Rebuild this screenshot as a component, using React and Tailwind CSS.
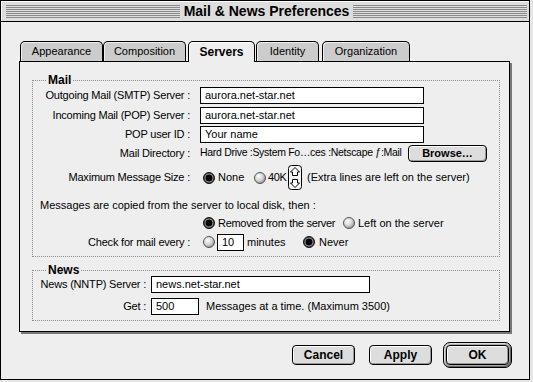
import React from "react";

const sans = "font-['Liberation_Sans',Arial,sans-serif]";

function Stripes() {
  return (
    <div className="flex flex-1 flex-col gap-px">
      {[0, 1, 2, 3, 4, 5, 6].map((i) => (
        <div key={i} className="h-px bg-[#8a8a8a]" />
      ))}
    </div>
  );
}

function Radio({ on }) {
  if (on) {
    return (
      <svg width="12" height="12" viewBox="0 0 12 12" className="shrink-0">
        <circle cx="6" cy="6" r="5.5" fill="#444" stroke="#111" />
        <circle cx="6" cy="6" r="4" fill="none" stroke="#9a9a9a" strokeWidth="0.8" />
        <circle cx="6" cy="6" r="3.3" fill="#000" />
      </svg>
    );
  }
  return (
    <svg width="12" height="12" viewBox="0 0 12 12" className="shrink-0">
      <defs>
        <radialGradient id="sphere" cx="38%" cy="35%" r="70%">
          <stop offset="0" stopColor="#ffffff" />
          <stop offset="0.55" stopColor="#d4d4d4" />
          <stop offset="1" stopColor="#8a8a8a" />
        </radialGradient>
      </defs>
      <circle cx="6" cy="6" r="5.5" fill="url(#sphere)" stroke="#555" />
    </svg>
  );
}

function Stepper() {
  return (
    <svg width="14" height="25" viewBox="0 0 14 25" className="shrink-0">
      <rect x="0.5" y="0.5" width="13" height="24" rx="3" fill="#f4f4f4" stroke="#000" />
      <path d="M7 2.5 L11.5 7 L9.5 7 L9.5 10.5 L4.5 10.5 L4.5 7 L2.5 7 Z" fill="#fff" stroke="#000" />
      <path d="M7 22.5 L11.5 18 L9.5 18 L9.5 14.5 L4.5 14.5 L4.5 18 L2.5 18 Z" fill="#fff" stroke="#000" />
    </svg>
  );
}

function Field({ className, children }) {
  return (
    <div className={`h-[17px] border border-black bg-white flex items-center pl-[4px] whitespace-nowrap ${className}`}>
      {children}
    </div>
  );
}

function MailRow({ label, children, className = "" }) {
  return (
    <div className={`flex items-center ${className}`}>
      <div className="w-[157px] shrink-0 flex justify-end whitespace-nowrap tracking-[-0.2px]">{label}</div>
      <div className="ml-[10px] flex items-center">{children}</div>
    </div>
  );
}

function NewsRow({ label, children, className = "" }) {
  return (
    <div className={`flex items-center ${className}`}>
      <div className="w-[113px] shrink-0 flex justify-end whitespace-nowrap tracking-[-0.2px]">{label}</div>
      <div className="ml-[5px] flex items-center">{children}</div>
    </div>
  );
}

export default function App() {
  return (
    <div className={`w-[533px] h-[382px] bg-[#e6e6e6] text-[11px] text-black ${sans}`}>
      <div className="w-[530px] h-[380px] border border-black bg-[#eeeeee] flex flex-col">
        {/* title bar */}
        <div className="h-[21px] shrink-0 border-b border-black bg-[#dddddd] flex items-center pl-[5px] pr-[2px] shadow-[inset_1px_1px_0_#ffffff]">
          <Stripes />
          <div className="px-[4px] text-[14px] font-bold leading-none whitespace-nowrap">
            Mail &amp; News Preferences
          </div>
          <Stripes />
        </div>

        <div className="pl-[18px] pt-[19px]">
          {/* tabs */}
          <div className="flex h-[20px] items-start">
            <div className="ml-[1px] w-[83px] h-[20px] rounded-t-[5px] border border-b-0 border-black bg-[#cccccc] shadow-[inset_1px_1px_0_#eeeeee] flex items-center justify-center">
              Appearance
            </div>
            <div className="w-[83px] h-[20px] rounded-t-[5px] border border-b-0 border-black bg-[#cccccc] shadow-[inset_1px_1px_0_#eeeeee] flex items-center justify-center">
              Composition
            </div>
            <div className="relative z-10 ml-[2px] w-[67px] h-[21px] rounded-t-[5px] border border-b-0 border-black bg-[#eeeeee] shadow-[inset_1px_1px_0_#ffffff] flex items-center justify-center text-[12px] font-bold">
              Servers
            </div>
            <div className="ml-[1px] w-[63px] h-[20px] rounded-t-[5px] border border-b-0 border-black bg-[#cccccc] shadow-[inset_1px_1px_0_#eeeeee] flex items-center justify-center">
              Identity
            </div>
            <div className="ml-[3px] w-[88px] h-[20px] rounded-t-[5px] border border-b-0 border-black bg-[#cccccc] shadow-[inset_1px_1px_0_#eeeeee] flex items-center justify-center">
              Organization
            </div>
          </div>

          {/* panel */}
          <div className="w-[491px] h-[271px] border border-black bg-[#eeeeee] shadow-[2px_2px_0_#777777] flex flex-col">
            {/* Mail group */}
            <div className="relative ml-[12px] mt-[18px] w-[468px] h-[177px] border border-dotted border-[#8c8c8c] pt-[5px] flex flex-col">
              <div className="absolute left-[13px] -top-[8px] px-[2px] bg-[#eeeeee] text-[12px] font-bold leading-[14px]">
                Mail
              </div>
              <MailRow label="Outgoing Mail (SMTP) Server :" className="h-[18px]">
                <Field className="w-[224px]">aurora.net-star.net</Field>
              </MailRow>
              <MailRow label="Incoming Mail (POP) Server :" className="h-[18px] mt-[2px]">
                <Field className="w-[224px]">aurora.net-star.net</Field>
              </MailRow>
              <MailRow label="POP user ID :" className="h-[18px] mt-[1px]">
                <Field className="w-[224px]">Your name</Field>
              </MailRow>
              <MailRow label="Mail Directory :" className="h-[18px] mt-[1px]">
                <span className="w-[208px] whitespace-nowrap overflow-hidden text-[10.5px] tracking-[-0.3px]">Hard Drive :System Fo…ces :Netscape ƒ:Mail</span>
                <div className="w-[79px] h-[17px] rounded-[4px] border border-black bg-[#dddddd] shadow-[inset_1px_1px_0_#ffffff,inset_-1px_-1px_0_#999999] flex items-center justify-center font-bold text-[11px]">
                  Browse…
                </div>
              </MailRow>
              <MailRow label="Maximum Message Size :" className="h-[25px] mt-[3px]">
                <span className="ml-[3px]"><Radio on /></span>
                <span className="ml-[3px] w-[36px]">None</span>
                <Radio />
                <span className="ml-[2px] w-[19px] tracking-[-0.4px]">40K</span>
                <span className="ml-[1px]"><Stepper /></span>
                <span className="ml-[5px] whitespace-nowrap">(Extra lines are left on the server)</span>
              </MailRow>
              <div className="h-[18px] mt-[6px] pl-[7px] flex items-center whitespace-nowrap">
                Messages are copied from the server to local disk, then :
              </div>
              <MailRow label="" className="h-[18px]">
                <span className="ml-[3px]"><Radio on /></span>
                <span className="ml-[3px] w-[125px] whitespace-nowrap tracking-[-0.3px]">Removed from the server</span>
                <Radio />
                <span className="ml-[3px] whitespace-nowrap">Left on the server</span>
              </MailRow>
              <MailRow label="Check for mail every :" className="h-[18px] mt-[1px]">
                <span className="ml-[3px]"><Radio /></span>
                <Field className="ml-[2px] w-[27px]">10</Field>
                <span className="ml-[3px] w-[56px]">minutes</span>
                <Radio on />
                <span className="ml-[4px]">Never</span>
              </MailRow>
            </div>

            {/* News group */}
            <div className="relative ml-[12px] mt-[13px] w-[468px] h-[51px] border border-dotted border-[#8c8c8c] pt-[5px] flex flex-col">
              <div className="absolute left-[13px] -top-[8px] px-[2px] bg-[#eeeeee] text-[12px] font-bold leading-[14px]">
                News
              </div>
              <NewsRow label="News (NNTP) Server :" className="h-[17px]">
                <Field className="w-[219px]">news.net-star.net</Field>
              </NewsRow>
              <NewsRow label="Get :" className="h-[17px] mt-[5px]">
                <Field className="w-[48px]">500</Field>
                <span className="ml-[7px] whitespace-nowrap">Messages at a time. (Maximum 3500)</span>
              </NewsRow>
            </div>
          </div>

          {/* buttons */}
          <div className="w-[493px] mt-[10px] flex justify-end items-center">
            <div className="w-[63px] h-[20px] rounded-[4px] border border-black bg-[#dddddd] shadow-[inset_1px_1px_0_#ffffff,inset_-1px_-1px_0_#999999] flex items-center justify-center font-bold text-[12px]">
              Cancel
            </div>
            <div className="ml-[14px] w-[63px] h-[20px] rounded-[4px] border border-black bg-[#dddddd] shadow-[inset_1px_1px_0_#ffffff,inset_-1px_-1px_0_#999999] flex items-center justify-center font-bold text-[12px]">
              Apply
            </div>
            <div className="ml-[11px] w-[69px] h-[26px] rounded-[7px] border border-black bg-[#aaaaaa] p-[2px] shadow-[inset_1px_1px_0_#dddddd,inset_-1px_-1px_0_#666666]">
              <div className="w-full h-full rounded-[4px] border border-black bg-[#dddddd] shadow-[inset_1px_1px_0_#ffffff,inset_-1px_-1px_0_#999999] flex items-center justify-center font-bold text-[12px]">
                OK
              </div>
            </div>
          </div>
        </div>
      </div>
    </div>
  );
}
